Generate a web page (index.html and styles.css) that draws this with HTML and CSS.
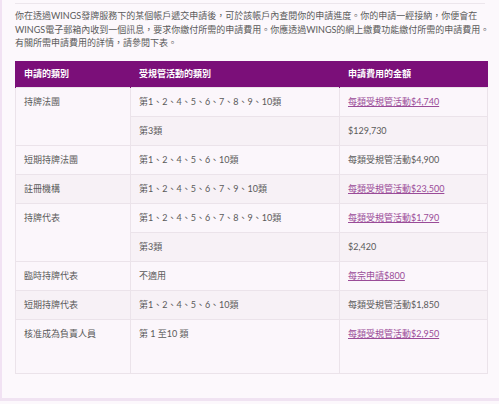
FILE: index.html
```html
<!DOCTYPE html>
<html lang="zh-Hant">
<head>
<meta charset="utf-8">
<link rel="stylesheet" href="styles.css">
</head>
<body>
<div class="page">
  <div class="content">
    <hr class="rule">
    <p class="intro">你在透過WINGS發牌服務下的某個帳戶遞交申請後，可於該帳戶內查閱你的申請進度。你的申請一經接納，你便會在WINGS電子郵箱內收到一個訊息，要求你繳付所需的申請費用。你應透過WINGS的網上繳費功能繳付所需的申請費用。有關所需申請費用的詳情，請參閱下表。</p>
    <table class="fees">
      <colgroup>
        <col class="c1"><col class="c2"><col class="c3">
      </colgroup>
      <thead>
        <tr><th>申請的類別</th><th>受規管活動的類別</th><th>申請費用的金額</th></tr>
      </thead>
      <tbody>
        <tr class="odd"><td rowspan="2">持牌法團</td><td>第1、2、4、5、6、7、8、9、10類</td><td><a href="#">每類受規管活動$4,740</a></td></tr>
        <tr class="even"><td>第3類</td><td>$129,730</td></tr>
        <tr class="odd"><td>短期持牌法團</td><td>第1、2、4、5、6、10類</td><td>每類受規管活動$4,900</td></tr>
        <tr class="even"><td>註冊機構</td><td>第1、2、4、5、6、7、9、10類</td><td><a href="#">每類受規管活動$23,500</a></td></tr>
        <tr class="odd"><td rowspan="2">持牌代表</td><td>第1、2、4、5、6、7、8、9、10類</td><td><a href="#">每類受規管活動$1,790</a></td></tr>
        <tr class="even"><td>第3類</td><td>$2,420</td></tr>
        <tr class="odd"><td>臨時持牌代表</td><td>不適用</td><td><a href="#">每宗申請$800</a></td></tr>
        <tr class="even"><td>短期持牌代表</td><td>第1、2、4、5、6、10類</td><td>每類受規管活動$1,850</td></tr>
        <tr class="odd last"><td>核准成為負責人員</td><td>第 1 至10 類</td><td><a href="#">每類受規管活動$2,950</a></td></tr>
      </tbody>
    </table>
  </div>
</div>
</body>
</html>
```
FILE: styles.css
```css
html, body {
  margin: 0;
  padding: 0;
  background: #fcf8fc;
}
body {
  font-family: "Lato", "Noto Sans CJK TC", sans-serif;
  font-size: 9px;
  color: #5a5a5a;
}
.page {
  height: 401px;
  border-left: 2px solid #f1e2f3;
  border-bottom: 3px solid #f0e3f2;
  box-sizing: border-box;
}
.content {
  padding: 3px 0 0 13px;
}
.rule {
  margin: 0;
  border: 0;
  border-top: 1px solid #ece6ec;
  width: 470px;
}
.intro {
  margin: 5px 0 11px 0;
  line-height: 13.5px;
  width: 482px;
}
.fees {
  border-collapse: collapse;
  width: 472px;
  table-layout: fixed;
}
.c1 { width: 115px; }
.c2 { width: 209px; }
.c3 { width: 148px; }
.fees th {
  background: #7b0f79;
  color: #fff;
  font-weight: 700;
  text-align: left;
  height: 27px;
  padding: 0 8px;
  box-sizing: border-box;
  line-height: 13px;
  border-left: 1px solid #7b0f79;
}
.fees td {
  border: 1px solid #ebe3ea;
  padding: 7px 8px;
  height: 29px;
  box-sizing: border-box;
  vertical-align: middle;
  line-height: 13.5px;
}
.fees tr.odd td { background: #fbf6fb; }
.fees tr.even td { background: #f7f1f6; }
.fees td[rowspan] { vertical-align: top; }
.fees tr.last td {
  height: 54px;
  vertical-align: top;
}
.fees a {
  color: #9a4b98;
  text-decoration: underline;
}
```
